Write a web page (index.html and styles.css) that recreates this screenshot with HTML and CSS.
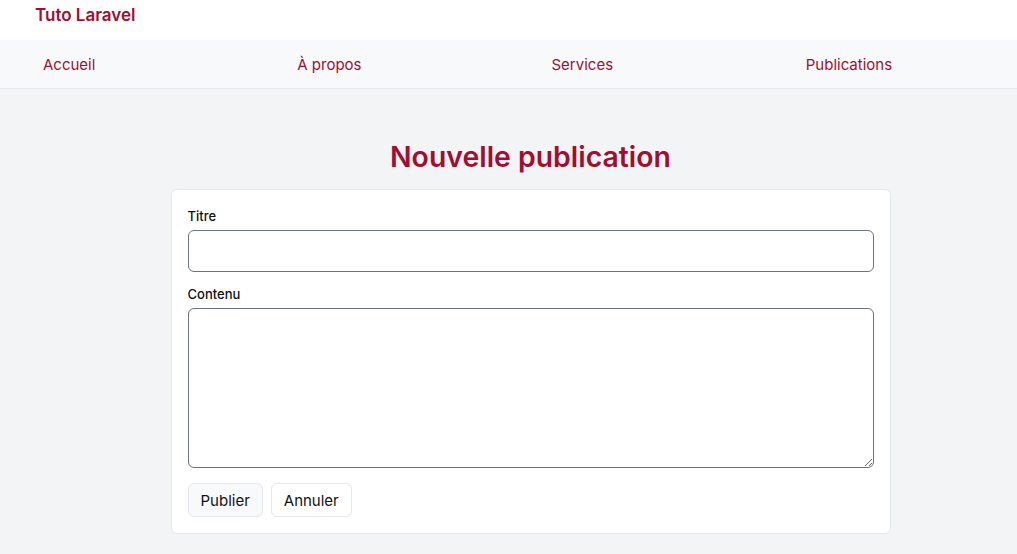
FILE: index.html
```html
<!DOCTYPE html>
<html lang="fr">
<head>
<meta charset="utf-8">
<title>Nouvelle publication</title>
<link rel="stylesheet" href="styles.css">
</head>
<body>
<header class="topbar">
  <a class="brand" href="#">Tuto Laravel</a>
</header>
<nav class="nav">
  <a class="nav-link" href="#">Accueil</a>
  <a class="nav-link" href="#">À propos</a>
  <a class="nav-link" href="#">Services</a>
  <a class="nav-link" href="#">Publications</a>
</nav>
<main class="main">
  <div class="container">
    <h1 class="title">Nouvelle publication</h1>
    <form class="card">
      <label class="label" for="titre">Titre</label>
      <input class="input" id="titre" type="text">
      <label class="label label-second" for="contenu">Contenu</label>
      <textarea class="textarea" id="contenu"></textarea>
      <div class="actions">
        <button class="btn btn-primary" type="button">Publier</button>
        <button class="btn" type="button">Annuler</button>
      </div>
    </form>
  </div>
</main>
</body>
</html>
```
FILE: styles.css
```css
* { box-sizing: border-box; }
html, body { margin: 0; padding: 0; }
body {
  font-family: Inter, "Noto Sans", sans-serif;
  background: #f3f4f6;
  color: #111827;
  min-height: 554px;
}
.topbar {
  background: #fff;
  height: 40px;
  display: flex;
  align-items: center;
  padding-left: 35px;
}
.brand {
  color: #a50d2f;
  text-decoration: none;
  font-weight: 600;
  font-size: 17px;
  margin-top: -10px;
}
.nav {
  background: #f8f9fa;
  height: 49px;
  border-bottom: 1px solid #e5e7eb;
  display: grid;
  grid-template-columns: repeat(4, 1fr);
  align-items: center;
}
.nav-link {
  color: #a50d2f;
  text-decoration: none;
  font-size: 15px;
  padding-left: 43px;
  justify-self: start;
}
.main {
  display: flex;
  justify-content: center;
  padding-left: 44px;
}
.container {
  width: 720px;
  display: flex;
  flex-direction: column;
}
.title {
  margin: 50px 0 0;
  text-align: center;
  color: #a50d2f;
  font-size: 28.4px;
  font-weight: 600;
  line-height: 36px;
}
.card {
  margin-top: 14px;
  background: #fff;
  border: 1px solid #e5e7eb;
  border-radius: 6px;
  padding: 17px 16px 16px;
  display: flex;
  flex-direction: column;
}
.label {
  font-size: 13px;
  font-weight: 500;
  color: #111;
  line-height: 18px;
  margin-bottom: 5px;
}
.label-second { margin-top: 13px; }
.input, .textarea {
  border: 1px solid #6b7280;
  border-radius: 6px;
  background: #fff;
  font-family: inherit;
  font-size: 15px;
  width: 100%;
}
.input { height: 42px; }
.textarea { height: 160px; resize: vertical; display: block; }
.actions {
  display: flex;
  gap: 8px;
  margin-top: 15px;
}
.btn {
  font-family: inherit;
  font-size: 15px;
  color: #111;
  background: #fff;
  border: 1px solid #e5e7eb;
  border-radius: 6px;
  height: 34px;
  padding: 0 12px;
  cursor: pointer;
}
.btn-primary { background: #f8f9fa; }
```
